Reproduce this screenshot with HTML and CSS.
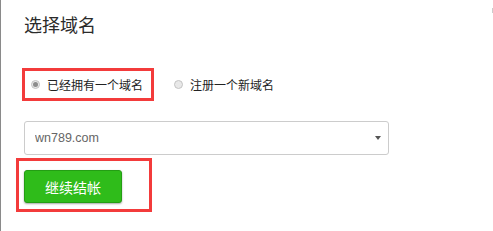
FILE: index.html
```html
<!DOCTYPE html>
<html lang="zh-CN">
<head>
  <meta charset="UTF-8">
  <meta name="viewport" content="width=device-width, initial-scale=1.0">
  <title>选择域名</title>
  <link rel="stylesheet" href="styles.css">
</head>
<body>
  <div class="panel">
    <h3 class="title">选择域名</h3>
    <div class="options">
      <label class="option marked">
        <input type="radio" name="domain" value="own" checked>
        <span>已经拥有一个域名</span>
      </label>
      <label class="option">
        <input type="radio" name="domain" value="new">
        <span>注册一个新域名</span>
      </label>
    </div>
    <div class="select-wrap">
      <select class="domain-select">
        <option>wn789.com</option>
      </select>
    </div>
    <div class="submit-box">
      <button type="button" class="btn">继续结帐</button>
    </div>
  </div>
  <span class="edge-mark"></span>
</body>
</html>
```

FILE: styles.css
```css
* {
  margin: 0;
  padding: 0;
  box-sizing: border-box;
}

html, body {
  height: 100%;
}

body {
  font-family: "Liberation Sans", "Noto Sans CJK SC", sans-serif;
  background-color: #fff;
  color: #333;
  border-left: 1px solid #8a8a8a;
  position: relative;
}

.panel {
  padding: 13px 24px 0 23px;
}

.title {
  font-size: 18px;
  font-weight: normal;
  line-height: 26px;
  color: #2b2b2b;
}

.options {
  display: flex;
  align-items: center;
  margin-top: 29px;
  margin-left: -2px;
}

.option {
  display: flex;
  align-items: center;
  height: 33px;
  font-size: 12px;
  color: #222;
  border: 3px solid transparent;
  padding: 0 8px 0 6px;
}

.option.marked {
  border-color: #f33b3b;
  margin-right: 11px;
}

.option input {
  appearance: none;
  -webkit-appearance: none;
  width: 9px;
  height: 9px;
  border: 1px solid #c4c4c4;
  border-radius: 50%;
  background: #e8e8e8;
  margin-right: 7px;
  position: relative;
}

.option input:checked::after {
  content: "";
  position: absolute;
  left: 1px;
  top: 1px;
  width: 5px;
  height: 5px;
  border-radius: 50%;
  background: #8c8c8c;
}

.select-wrap {
  position: relative;
  width: 365px;
  margin-top: 20px;
}

.select-wrap::after {
  content: "";
  position: absolute;
  right: 8px;
  top: 15px;
  border-left: 3px solid transparent;
  border-right: 3px solid transparent;
  border-top: 4px solid #555;
  pointer-events: none;
}

.domain-select {
  appearance: none;
  -webkit-appearance: none;
  width: 100%;
  height: 34px;
  border: 1px solid #ccc;
  border-radius: 3px;
  background: #fff;
  padding: 0 10px;
  font-family: "Liberation Sans", sans-serif;
  font-size: 12.5px;
  color: #666;
}

.submit-box {
  display: inline-block;
  margin: 3px 0 0 -8px;
  border: 3px solid #f33b3b;
  padding: 9px 27px 6px 5px;
}

.btn {
  display: block;
  width: 98px;
  height: 33px;
  background-color: #2fbc1a;
  border: 1px solid #249e14;
  border-radius: 3px;
  box-shadow: 0 1px 2px rgba(0, 0, 0, 0.35);
  color: #fff;
  font-family: "Liberation Sans", "Noto Sans CJK SC", sans-serif;
  font-size: 14px;
  cursor: pointer;
}

.edge-mark {
  position: absolute;
  right: 0;
  top: 8px;
  width: 1px;
  height: 5px;
  background: #ccc;
}
```
